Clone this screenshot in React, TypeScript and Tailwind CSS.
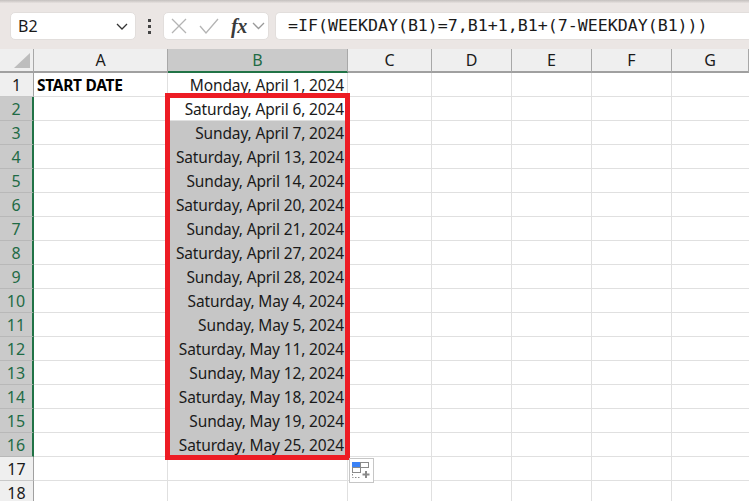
const dates = [
  "Monday, April 1, 2024", "Saturday, April 6, 2024", "Sunday, April 7, 2024", "Saturday, April 13, 2024",
  "Sunday, April 14, 2024", "Saturday, April 20, 2024", "Sunday, April 21, 2024", "Saturday, April 27, 2024",
  "Sunday, April 28, 2024", "Saturday, May 4, 2024", "Sunday, May 5, 2024", "Saturday, May 11, 2024",
  "Sunday, May 12, 2024", "Saturday, May 18, 2024", "Sunday, May 19, 2024", "Saturday, May 25, 2024",
];
const font = "[font-family:'Noto_Sans',sans-serif]";

function Row({ n }: { n: number }) {
  const sel = n >= 2 && n <= 16;
  const gray = n >= 3 && n <= 16;
  return (
    <div className="flex h-[24px] shrink-0">
      <div className={`w-[34px] shrink-0 flex items-center justify-center border-b pt-[1px] text-[16px] ${sel ? "bg-[#cacaca] border-[#b8b8b8] text-[#1f6b45] border-r-2 border-r-[#217346]" : "bg-[#efefef] border-[#c8c8c8] text-[#1a1a1a] border-r border-r-[#a0a0a0]"}`}>{n}</div>
      <div className="w-[134px] shrink-0 border-r border-b border-[#e0e0e0] pl-[3px] pt-[3px] flex items-center text-[15.500px] font-bold tracking-[-0.3px] text-black whitespace-nowrap">{n === 1 ? "START DATE" : ""}</div>
      <div className={`w-[180px] shrink-0 border-r border-b flex items-center justify-end pr-[3px] pt-[3px] text-[15.500px] tracking-[-0.14px] text-[#1a1a1a] whitespace-nowrap ${gray ? "bg-[#c6c6c6] border-[#c6c6c6]" : "bg-white border-[#e0e0e0]"}`}>{dates[n - 1] ?? ""}</div>
      <div className="w-[84px] shrink-0 border-r border-b border-[#e0e0e0]" />
      <div className="w-[80px] shrink-0 border-r border-b border-[#e0e0e0]" />
      <div className="w-[80px] shrink-0 border-r border-b border-[#e0e0e0]" />
      <div className="w-[80px] shrink-0 border-r border-b border-[#e0e0e0]" />
      <div className="flex-1 border-b border-[#e0e0e0]" />
    </div>
  );
}

function Head({ w, label, active, grow }: { w: string; label: string; active?: boolean; grow?: boolean }) {
  return (
    <div className={`${w} ${grow ? "flex-1" : "shrink-0"} flex items-center justify-center border-b-2 text-[16px] ${active ? "bg-[#cacaca] border-b-[#217346] text-[#1f6b45] border-r border-r-[#a8a8a8]" : "bg-[#efefef] border-b-[#a0a0a0] text-[#1a1a1a] border-r border-r-[#a8a8a8]"}`}>{label}</div>
  );
}

export default function App() {
  return (
    <div className={`relative w-[749px] h-[501px] overflow-hidden bg-white ${font}`}>
      <div className="h-[49px] bg-[#ebe6e4] flex flex-col">
        <div className="h-[3px] bg-gradient-to-b from-[#c4c0be] to-[#e6e1df]" />
        <div className="flex items-start pt-[9px] pl-[10px]">
          <div className="w-[126px] h-[28px] bg-white rounded-[5px] border border-[#e2dedc] flex items-center justify-between pl-[7px] pr-[6px] text-[16px] text-[#1a1a1a]">
            <span>B2</span>
            <svg width="14" height="14" viewBox="0 0 14 14" fill="none" stroke="#333" strokeWidth="1.3"><path d="M2 5l5 5 5-5" /></svg>
          </div>
          <div className="w-[27px] h-[28px] flex flex-col items-center justify-center gap-[3px]">
            <span className="w-[3px] h-[3px] bg-[#444]" />
            <span className="w-[3px] h-[3px] bg-[#444]" />
            <span className="w-[3px] h-[3px] bg-[#444]" />
          </div>
          <div className="w-[106px] h-[28px] bg-white rounded-[5px] border border-[#e2dedc] flex items-center pl-[7px]">
            <svg width="16" height="16" viewBox="0 0 16 16" fill="none" stroke="#b4b4b4" strokeWidth="1.3"><path d="M1 1l14 14M15 1L1 15" /></svg>
            <svg className="ml-[12px]" width="20" height="16" viewBox="0 0 20 16" fill="none" stroke="#b4b4b4" strokeWidth="1.3"><path d="M1 8l6 7L19 1" /></svg>
            <span className="ml-[12px] text-[20px] leading-none italic font-bold text-[#3a3a3a] [font-family:'Liberation_Serif',serif] tracking-[-0.5px]">fx</span>
            <svg className="ml-[5px]" width="13" height="12" viewBox="0 0 13 12" fill="none" stroke="#999" strokeWidth="1.3"><path d="M1 3l5.500 5.500L12 3" /></svg>
          </div>
          <div className="ml-[6px] flex-1 h-[28px] bg-white rounded-l-[5px] border border-r-0 border-[#e2dedc] flex items-center pl-[12px] pt-[1px] text-[16.600px] text-[#1a1a1a] whitespace-nowrap [font-family:'DejaVu_Sans_Mono',monospace]">
            =IF(WEEKDAY(B1)=7,B1+1,B1+(7-WEEKDAY(B1)))
          </div>
        </div>
      </div>

      <div className="flex h-[24px]">
        <div className="w-[34px] shrink-0 bg-[#efefef] border-r border-r-[#a8a8a8] border-b-2 border-b-[#a0a0a0] flex items-end justify-end pr-[3px] pb-[3px]">
          <svg width="16" height="15" viewBox="0 0 16 15"><path d="M16 0v15H0z" fill="#bdbdbd" /></svg>
        </div>
        <Head w="w-[134px]" label="A" />
        <Head w="w-[180px]" label="B" active />
        <Head w="w-[84px]" label="C" />
        <Head w="w-[80px]" label="D" />
        <Head w="w-[80px]" label="E" />
        <Head w="w-[80px]" label="F" />
        <Head w="" label="G" grow />
      </div>

      {Array.from({ length: 18 }, (_, i) => <Row key={i} n={i + 1} />)}

      <div className="absolute left-[165px] top-[93px] w-[185px] h-[367px] border-[5px] border-[#ed1c24] pointer-events-none" />
      <div className="absolute left-[349px] top-[458px] w-[25px] h-[25px] bg-white border border-[#c6c6c6] flex items-center justify-center">
        <svg width="19" height="17" viewBox="0 0 19 17" fill="none">
          <rect x="0.500" y="0.500" width="8" height="5" fill="#3b82f6" stroke="#3b82f6" />
          <rect x="8.500" y="0.500" width="8" height="5" stroke="#8a8a8a" />
          <rect x="0.500" y="5.500" width="8" height="5" stroke="#8a8a8a" />
          <path d="M0.500 12v3.500h8" stroke="#8a8a8a" strokeDasharray="1.500 1.500" />
          <path d="M14 9v7M10.500 12.500h7" stroke="#8a8a8a" strokeWidth="2" />
        </svg>
      </div>
    </div>
  );
}
